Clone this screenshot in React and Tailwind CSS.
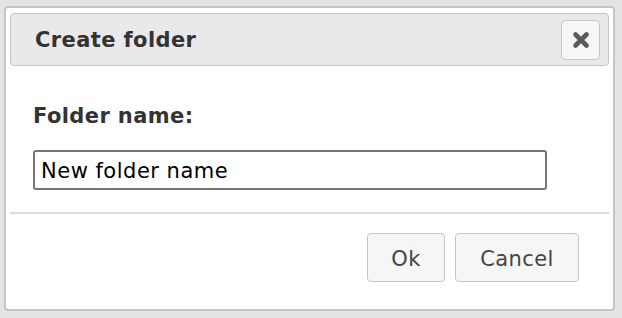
import React, { useState } from 'react'

const font = { fontFamily: '"DejaVu Sans", Verdana, sans-serif' }

function CloseIcon() {
  return (
    <svg width="18" height="18" viewBox="0 0 18 18" className="block">
      <path d="M3.5 3.5 L14.5 14.5 M14.5 3.5 L3.5 14.5" stroke="#5a5a5a" strokeWidth="4.6" strokeLinecap="round" />
    </svg>
  )
}

export default function App() {
  const [name, setName] = useState('New folder name')

  return (
    <div className="w-[622px] h-[318px] bg-[#e4e4e4] pt-[6px] pl-[4px]" style={font}>
      <div className="w-[611px] h-[305px] bg-white border-2 border-[#c5c5c5] rounded-[4px] px-[4px] pt-[5px] flex flex-col">
        <div className="h-[53px] bg-[#e9e9e9] border border-[#c5c5c5] rounded-[4px] flex items-center justify-between pl-[24px] pr-[8px]">
          <span className="text-[21px] tracking-[0.4px] font-bold text-[#333] pt-[3px]">Create folder</span>
          <button className="w-[39px] h-[40px] bg-[#f6f6f6] border border-[#c5c5c5] rounded-[4px] flex items-center justify-center">
            <CloseIcon />
          </button>
        </div>

        <div className="pl-[23px] pt-[38px]">
          <label className="block text-[21px] tracking-[0.4px] leading-[24px] font-bold text-[#333]">Folder name:</label>
          <input
            value={name}
            onChange={e => setName(e.target.value)}
            className="mt-[22px] w-[514px] h-[40px] border-2 border-[#767676] rounded-[3px] px-[6px] pt-[2px] text-[21px] tracking-[0.5px] text-black outline-none"
            style={font}
          />
        </div>

        <div className="mt-[22px] h-[2px] bg-[#dddddd]" />

        <div className="flex justify-end gap-[10px] pr-[30px] pt-[19px]">
          <button className="w-[78px] h-[49px] pt-[4px] bg-[#f6f6f6] border border-[#c5c5c5] rounded-[4px] text-[21px] tracking-[0.4px] text-[#454545]">Ok</button>
          <button className="w-[124px] h-[49px] pt-[4px] bg-[#f6f6f6] border border-[#c5c5c5] rounded-[4px] text-[21px] tracking-[0.4px] text-[#454545]">Cancel</button>
        </div>
      </div>
    </div>
  )
}
